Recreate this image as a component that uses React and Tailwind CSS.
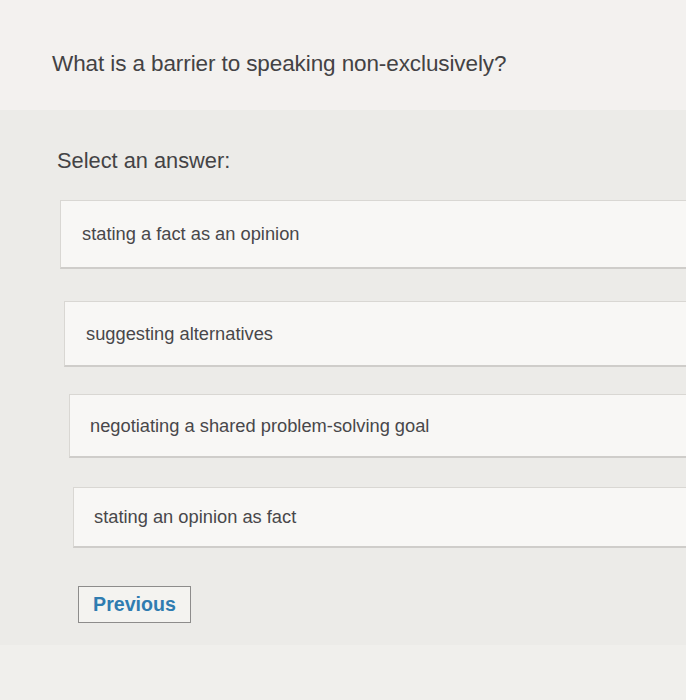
const answers = [
  { text: 'stating a fact as an opinion', cls: 'ml-[60px] mt-[26px] h-[69px] pl-[21px]' },
  { text: 'suggesting alternatives', cls: 'ml-[64px] mt-[32px] h-[66px] pl-[21px]' },
  { text: 'negotiating a shared problem-solving goal', cls: 'ml-[69px] mt-[27px] h-[64px] pl-[20px]' },
  { text: 'stating an opinion as fact', cls: 'ml-[73px] mt-[29px] h-[61px] pl-[20px]' },
];

export default function App() {
  return (
    <div className="w-[686px] h-[700px] overflow-hidden bg-[#ecebe8] font-['Liberation_Sans',Arial,sans-serif]">
      {/* Question */}
      <div className="h-[110px] bg-[#f3f1ef] pl-[52px] pt-[50px]">
        <h1 className="text-[22.5px] leading-[28px] text-[#434244] tracking-[-0.1px]">
          What is a barrier to speaking non-exclusively?
        </h1>
      </div>

      {/* Answers */}
      <div className="h-[535px] pt-[38px]">
        <p className="ml-[57px] text-[21.8px] leading-[26px] text-[#444345]">Select an answer:</p>
        {answers.map((a) => (
          <div
            key={a.text}
            className={`${a.cls} flex items-center bg-[#f8f7f5] border border-[#d9d7d3] border-r-0 border-b-2 border-b-[#cfcdca]`}
          >
            <span className="text-[18.3px] text-[#48474a]">{a.text}</span>
          </div>
        ))}
        <button className="ml-[78px] mt-[38px] w-[113px] h-[37px] border border-[#8d8c8b] bg-[#f4f3f0] text-[19.6px] font-bold text-[#2f7cb0]">
          Previous
        </button>
      </div>
      <div className="h-[55px] bg-[#f0efec]" />
    </div>
  );
}
